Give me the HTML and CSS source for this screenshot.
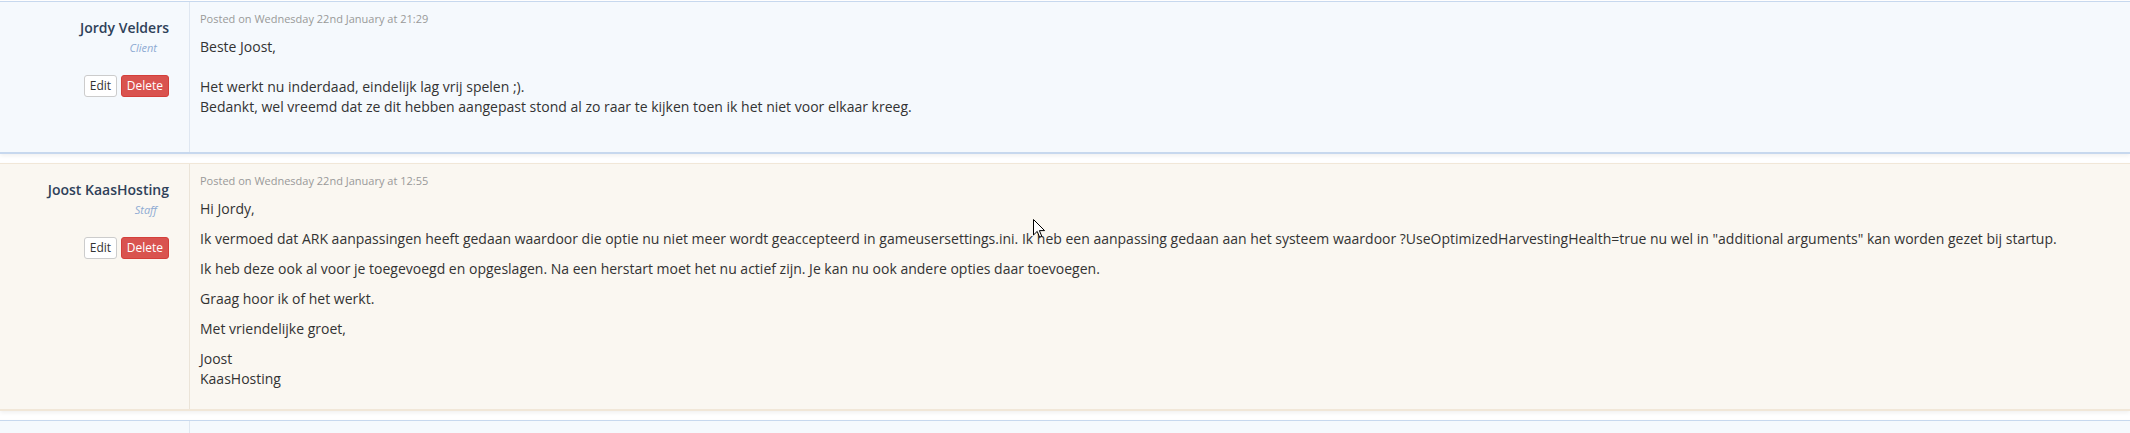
FILE: index.html
```html
<!DOCTYPE html>
<html>
<head>
    <title>Ticket replies</title>
    <link rel="stylesheet" href="styles.css">
</head>
<body>
    <div class="replies">
        <div class="reply client">
            <div class="user">
                <span class="name">Jordy Velders</span>
                <span class="type">Client</span>
                <div class="actions">
                    <button class="btn">Edit</button>
                    <button class="btn btn-danger">Delete</button>
                </div>
            </div>
            <div class="message">
                <div class="posted">Posted on Wednesday 22nd January at 21:29</div>
                <div class="plain">Beste Joost,<br><br>Het werkt nu inderdaad, eindelijk lag vrij spelen ;).<br>Bedankt, wel vreemd dat ze dit hebben aangepast stond al zo raar te kijken toen ik het niet voor elkaar kreeg.</div>
            </div>
        </div>

        <div class="reply staff">
            <div class="user">
                <span class="name">Joost KaasHosting</span>
                <span class="type">Staff</span>
                <div class="actions">
                    <button class="btn">Edit</button>
                    <button class="btn btn-danger">Delete</button>
                </div>
            </div>
            <div class="message">
                <div class="posted">Posted on Wednesday 22nd January at 12:55</div>
                <p>Hi Jordy,</p>
                <p>Ik vermoed dat ARK aanpassingen heeft gedaan waardoor die optie nu niet meer wordt geaccepteerd in gameusersettings.ini. Ik heb een aanpassing gedaan aan het systeem waardoor ?UseOptimizedHarvestingHealth=true nu wel in "additional arguments" kan worden gezet bij startup.</p>
                <p>Ik heb deze ook al voor je toegevoegd en opgeslagen. Na een herstart moet het nu actief zijn. Je kan nu ook andere opties daar toevoegen.</p>
                <p>Graag hoor ik of het werkt.</p>
                <p>Met vriendelijke groet,</p>
                <p>Joost<br>KaasHosting</p>
            </div>
        </div>

        <div class="reply client">
            <div class="user"></div>
            <div class="message"></div>
        </div>
    </div>

    <svg class="cursor" width="13" height="20" viewBox="0 0 13 20">
        <path d="M0.5 0.5 L0.5 16 L4.2 12.4 L6.6 18.2 L8.8 17.3 L6.4 11.6 L11.6 11.6 Z" fill="#fff" stroke="#000" stroke-width="1"/>
    </svg>
</body>
</html>
```

FILE: styles.css
```css
html, body {
    height: 433px;
    overflow: hidden;
}

body {
    margin: 0;
    padding-top: 1px;
    background: #fff;
    font-family: "Open Sans", "Liberation Sans", sans-serif;
    font-size: 14px;
    line-height: 20px;
    color: #333;
}

.reply {
    display: flex;
    margin-bottom: 9px;
    border-top: 1px solid;
    border-bottom: 2px solid;
    box-shadow: 0 2px 4px rgba(0, 0, 0, 0.06);
}

.reply.client {
    background-color: #f5f9fd;
    border-color: #c7d8ee;
}

.reply.staff {
    background-color: #faf7f1;
    border-color: #f1e7d8;
}

.user {
    width: 169px;
    flex-shrink: 0;
    padding: 16px 20px 10px 0;
    text-align: right;
    border-right: 1px solid #dfe7f1;
}

.staff .user {
    border-right-color: #ebe4d8;
}

.name {
    display: block;
    font-size: 14px;
    font-weight: 600;
    color: #2f4159;
}

.type {
    display: block;
    margin-top: 2px;
    padding-right: 12px;
    font-size: 11px;
    line-height: 16px;
    font-style: italic;
    color: #8eabd3;
}

.actions {
    margin-top: 19px;
}

.btn {
    display: inline-block;
    margin: 0;
    padding: 1px 5px;
    font-family: inherit;
    font-size: 12px;
    line-height: 18px;
    color: #333;
    background-color: #fff;
    border: 1px solid #ccc;
    border-radius: 3px;
    cursor: pointer;
}

.btn-danger {
    color: #fff;
    background-color: #d9534f;
    border-color: #d43f3a;
}

.message {
    flex: 1;
    padding: 9px 10px 10px 10px;
}

.posted {
    margin-bottom: 10px;
    font-size: 11px;
    line-height: 16px;
    color: #999;
}

.plain {
    margin-bottom: 25px;
}

.message p {
    margin: 0 0 10px;
}

.cursor {
    position: absolute;
    left: 1033px;
    top: 219px;
}
```
